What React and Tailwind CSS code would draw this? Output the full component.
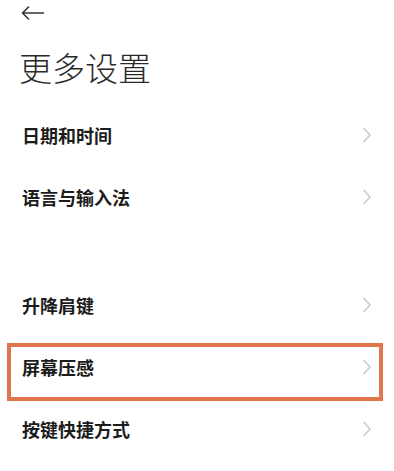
import React from "react";

const Chevron = () => (
  <svg width="10" height="16" viewBox="0 0 10 16" fill="none" className="shrink-0">
    <path d="M2 1.5 L8 8 L2 14.5" stroke="#c6c6c6" strokeWidth="1.4" strokeLinecap="round" strokeLinejoin="round" />
  </svg>
);

const Row = ({ label, highlight }) => (
  <div className="relative h-[62px] flex items-center justify-between pl-[22px] pr-[22px]">
    <span className="text-[18px] font-bold text-[#1c1c1c] leading-none">{label}</span>
    <Chevron />
    {highlight && (
      <div className="absolute left-[7px] top-[7px] w-[376px] h-[58px] border-[4.5px] border-[#e0754e] pointer-events-none" />
    )}
  </div>
);

export default function App() {
  return (
    <div
      className="w-[394px] h-[471px] bg-white overflow-hidden"
      style={{ fontFamily: '"Noto Sans CJK SC", "Noto Sans", sans-serif' }}
    >
      {/* back arrow */}
      <div className="h-[26px] flex items-center pl-[21px]">
        <svg width="24" height="14" viewBox="0 0 24 14" fill="none">
          <path d="M1.5 7 H22.5 M7.5 1 L1.5 7 L7.5 13" stroke="#333" strokeWidth="1.6" strokeLinecap="round" strokeLinejoin="round" />
        </svg>
      </div>

      {/* title */}
      <div className="h-[78px] flex items-center pl-[19px] pt-[4px]">
        <h1 className="text-[33px] font-light text-[#2a2a2a] leading-none">更多设置</h1>
      </div>

      <Row label="日期和时间" />
      <Row label="语言与输入法" />

      <div className="h-[46px]" />

      <Row label="升降肩键" />
      <Row label="屏幕压感" highlight />
      <Row label="按键快捷方式" />
    </div>
  );
}
